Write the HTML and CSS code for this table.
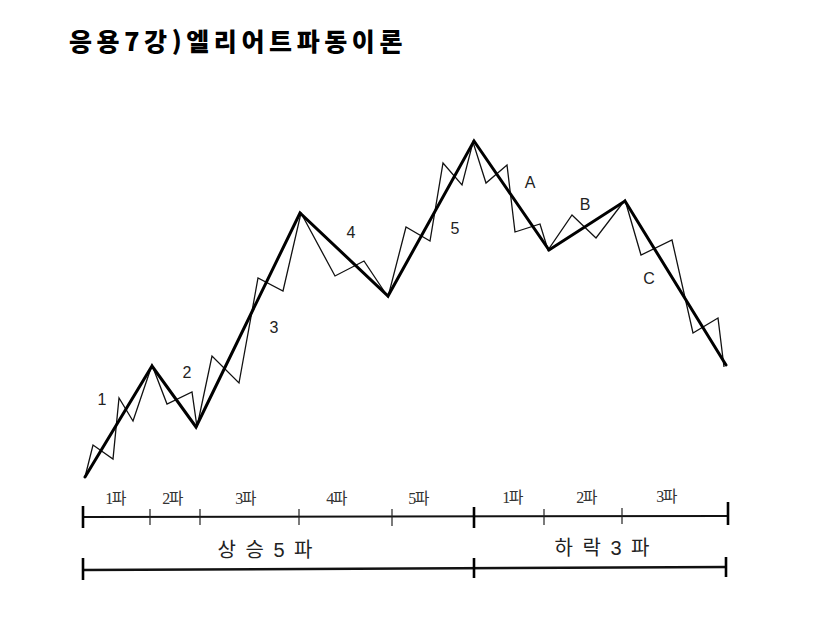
FILE: index.html
```html
<!DOCTYPE html>
<html lang="ko">
<head>
<meta charset="utf-8">
<title>응용7강)엘리어트파동이론</title>
<link rel="stylesheet" href="styles.css">
</head>
<body>
<div class="page">
  <h1 class="title">응용7강)엘리어트파동이론</h1>
  <svg class="chart" width="834" height="544" viewBox="0 80 834 544" xmlns="http://www.w3.org/2000/svg">
    <polyline class="thin" points="85,477 93,445 113,459 119,398 133,421 152,365 167,404 192,392 197,427 212,356 239,383 258,278 283,291 301,213 335,276 364,261 388,297 406,227 430,241 443,163 462,185 473,142 486,183 507,165 515,232 540,224 548,250 572,215 596,238 625,200 641,255 672,240 693,333 718,318 724,367"/>
    <polyline class="thick" points="85,477 152,366 196,427 300,213 388,296 474,141 549,250 625,201 726,365"/>

    <g class="wave">
      <text x="102" y="405">1</text>
      <text x="187" y="378">2</text>
      <text x="274" y="333">3</text>
      <text x="351" y="238">4</text>
      <text x="455" y="234">5</text>
      <text x="530" y="188">A</text>
      <text x="585" y="210">B</text>
      <text x="649" y="284">C</text>
    </g>

    <line class="axis" x1="82" y1="517" x2="729" y2="516"/>
    <line class="tick-major" x1="83" y1="506" x2="83" y2="528"/>
    <line class="tick" x1="150" y1="509" x2="150" y2="525"/>
    <line class="tick" x1="200" y1="509" x2="200" y2="525"/>
    <line class="tick" x1="299" y1="509" x2="299" y2="525"/>
    <line class="tick" x1="392" y1="509" x2="392" y2="526"/>
    <line class="tick-major" x1="474" y1="507" x2="474" y2="528"/>
    <line class="tick" x1="544" y1="509" x2="544" y2="525"/>
    <line class="tick" x1="622" y1="508" x2="622" y2="524"/>
    <line class="tick-major" x1="728" y1="502" x2="728" y2="525"/>

    <g class="seg">
      <text x="115" y="504">1파</text>
      <text x="172" y="504">2파</text>
      <text x="245" y="504">3파</text>
      <text x="336" y="504">4파</text>
      <text x="418" y="504">5파</text>
      <text x="512" y="503">1파</text>
      <text x="586" y="503">2파</text>
      <text x="666" y="502">3파</text>
    </g>

    <line class="axis2" x1="82" y1="570" x2="727" y2="567"/>
    <line class="tick-major" x1="83" y1="558" x2="83" y2="580"/>
    <line class="tick-major" x1="474" y1="558" x2="474" y2="578"/>
    <line class="tick-major" x1="726" y1="557" x2="726" y2="577"/>

    <g class="big">
      <text x="265" y="557">상 승 5 파</text>
      <text x="602" y="555">하 락 3 파</text>
    </g>
  </svg>
</div>
</body>
</html>
```
FILE: styles.css
```css
html, body {
  margin: 0;
  padding: 0;
  background: #ffffff;
}

.page {
  width: 834px;
  height: 624px;
  overflow: hidden;
}

.title {
  margin: 0;
  height: 80px;
  box-sizing: border-box;
  padding: 25px 0 0 69px;
  font-family: "Noto Sans CJK KR", "Liberation Sans", sans-serif;
  font-weight: 900;
  font-size: 25px;
  line-height: 30px;
  letter-spacing: 4.6px;
  color: #000;
}

.chart {
  display: block;
}

.thin {
  fill: none;
  stroke: #111;
  stroke-width: 1.3;
  stroke-linejoin: miter;
}

.thick {
  fill: none;
  stroke: #000;
  stroke-width: 3;
  stroke-linejoin: miter;
  stroke-linecap: round;
}

.wave text {
  font-family: "Liberation Sans", Arial, sans-serif;
  font-size: 16px;
  fill: #222;
  text-anchor: middle;
}

.axis {
  stroke: #111;
  stroke-width: 2;
}

.axis2 {
  stroke: #111;
  stroke-width: 2.5;
}

.tick {
  stroke: #222;
  stroke-width: 1.2;
}

.tick-major {
  stroke: #000;
  stroke-width: 2.6;
}

.seg text {
  font-family: "Liberation Serif", "Noto Sans CJK KR", serif;
  font-size: 16px;
  fill: #333;
  text-anchor: middle;
  letter-spacing: -1.5px;
}

.big text {
  font-family: "Liberation Sans", "Noto Sans CJK KR", sans-serif;
  font-size: 20px;
  fill: #222;
  text-anchor: middle;
  word-spacing: 4px;
}
```
